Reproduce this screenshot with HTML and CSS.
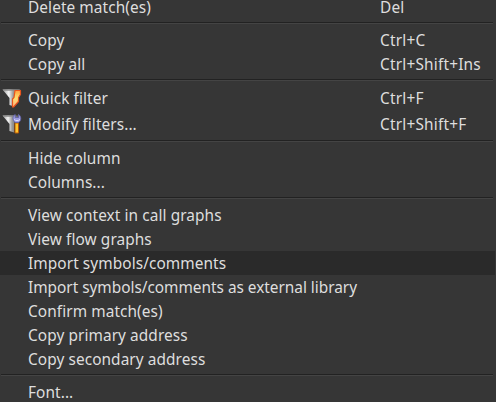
FILE: index.html
```html
<!DOCTYPE html>
<html lang="en">
<head>
<meta charset="utf-8">
<title>Menu</title>
<link rel="stylesheet" href="styles.css">
</head>
<body>
<div class="menu" role="menu">
  <div class="item first" role="menuitem"><span class="label">Delete match(es)</span><span class="key">Del</span></div>
  <div class="separator"></div>
  <div class="item" role="menuitem"><span class="label">Copy</span><span class="key">Ctrl+C</span></div>
  <div class="item" role="menuitem"><span class="label">Copy all</span><span class="key">Ctrl+Shift+Ins</span></div>
  <div class="separator"></div>
  <div class="item with-icon" role="menuitem">
    <svg class="icon" viewBox="0 0 20 20" width="20" height="20">
      <defs>
        <linearGradient id="metal" x1="0" x2="1" y1="0" y2="0"><stop offset="0" stop-color="#999"/><stop offset=".35" stop-color="#f4f4f4"/><stop offset=".6" stop-color="#999"/><stop offset="1" stop-color="#666"/></linearGradient>
        <linearGradient id="bolt" x1="0" x2="0" y1="0" y2="1"><stop offset="0" stop-color="#ffa040"/><stop offset=".45" stop-color="#ffe070"/><stop offset="1" stop-color="#ffb080"/></linearGradient>
      </defs>
      <path d="M.5 1.500h18L12 9.500v9L7.500 17V10z" fill="url(#metal)"/>
      <path d="M.5 1.500h17.500l-2 1.200H2z" fill="#8a8a8a"/>
      <path d="M13 2.500h5.500v4l-2 3v4L11.500 19h-1v-8l1.500-1.500z" fill="url(#bolt)" stroke="#e9541d" stroke-width="1.200" stroke-linejoin="round"/>
    </svg>
    <span class="label">Quick filter</span><span class="key">Ctrl+F</span>
  </div>
  <div class="item with-icon" role="menuitem">
    <svg class="icon" viewBox="0 0 20 20" width="20" height="20">
      <path d="M.5 1.500h16L12 9.500v9L7.500 17V10z" fill="url(#metal)"/>
      <path d="M.5 1.500h13l-2 1.200H2z" fill="#8a8a8a"/>
      <path d="M13 9h3.500v10H13z" fill="#ffc52c" stroke="#b85a08"/>
      <path d="M13.200.5C10 2 10.500 7 13.500 8.500h3C19.500 7 19.500 2 16.500.5v3h-3.300z" fill="#9c9ce0" stroke="#6262a8" stroke-width=".8"/>
      <path d="M12 5.500c2 1.500 4 1.500 6 0" fill="none" stroke="#dcdcff"/>
    </svg>
    <span class="label">Modify filters...</span><span class="key">Ctrl+Shift+F</span>
  </div>
  <div class="separator"></div>
  <div class="item" role="menuitem"><span class="label">Hide column</span></div>
  <div class="item" role="menuitem"><span class="label">Columns...</span></div>
  <div class="separator"></div>
  <div class="item" role="menuitem"><span class="label">View context in call graphs</span></div>
  <div class="item" role="menuitem"><span class="label">View flow graphs</span></div>
  <div class="item selected" role="menuitem"><span class="label">Import symbols/comments</span></div>
  <div class="item" role="menuitem"><span class="label long">Import symbols/comments as external library</span></div>
  <div class="item" role="menuitem"><span class="label">Confirm match(es)</span></div>
  <div class="item" role="menuitem"><span class="label">Copy primary address</span></div>
  <div class="item" role="menuitem"><span class="label">Copy secondary address</span></div>
  <div class="separator"></div>
  <div class="item" role="menuitem"><span class="label">Font...</span></div>
</div>
</body>
</html>
```
FILE: styles.css
```css
body {
  margin: 0;
  height: 402px;
  overflow: hidden;
  background: #363636;
}

.menu {
  display: flex;
  flex-direction: column;
  width: 495px;
  color: #dedede;
  font-family: "Noto Sans", "Open Sans", sans-serif;
  font-size: 15.4px;
  line-height: 22px;
}

.item {
  display: grid;
  grid-template-columns: 28px 352px 1fr;
  align-items: center;
  height: 24px;
  flex: none;
  white-space: nowrap;
}

.first {
  height: 14px;
  padding-bottom: 5px;
  line-height: 12px;
}

.with-icon {
  height: 26px;
}

.icon {
  grid-column: 1;
  margin-left: 2px;
}

.label {
  grid-column: 2;
  padding-top: 2px;
  letter-spacing: 0.08px;
}

.long {
  letter-spacing: -0.02px;
}

.key {
  grid-column: 3;
  padding-top: 2px;
  letter-spacing: 0.2px;
}

.selected {
  background: #2a2a2a;
}

.separator {
  flex: none;
  height: 1px;
  margin: 3px 2px 4px 1px;
  background: #222;
  border-bottom: 1px solid #444;
}
```
